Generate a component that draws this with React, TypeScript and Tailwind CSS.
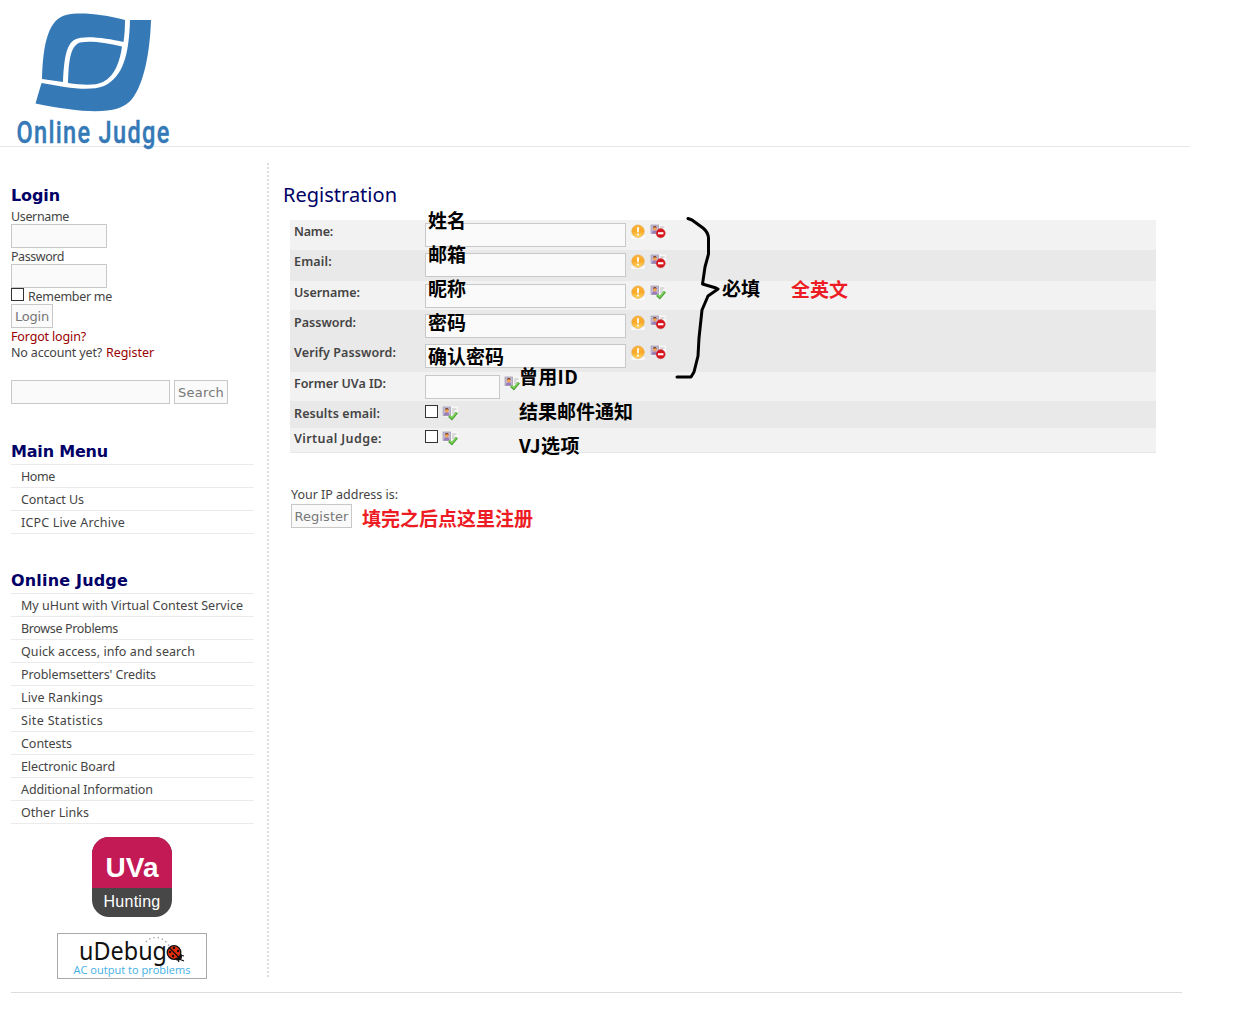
import { useLayoutEffect, useRef, useState } from "react";
import type { ReactNode } from "react";

/* Text whose tracking is spread so that the line takes a given width. */
function Fit({ w, className = "", children }: { w: number; className?: string; children: string }) {
  const ref = useRef<HTMLSpanElement>(null);
  const [gap, setGap] = useState(0);
  useLayoutEffect(() => {
    const natural = ref.current!.getBoundingClientRect().width - gap * children.length;
    setGap((w - natural) / children.length);
  }, [w, children]);
  return (
    <span ref={ref} style={{ letterSpacing: `${gap}px` }} className={`inline-block whitespace-nowrap ${className}`}>
      {children}
    </span>
  );
}

function Alert() {
  return (
    <svg width="16" height="16" viewBox="0 0 16 16" className="shrink-0">
      <defs>
        <linearGradient id="amber" x1="0" y1="0" x2="0" y2="1">
          <stop offset="0" stopColor="#fcb53a" />
          <stop offset=".5" stopColor="#faa826" />
          <stop offset="1" stopColor="#ffdc66" />
        </linearGradient>
      </defs>
      <rect x="1" y="12.500" width="14" height="3.500" rx="1.500" fill="#fff" opacity=".7" />
      <circle cx="8" cy="8.200" r="6.200" fill="url(#amber)" stroke="#e9a640" strokeWidth=".7" />
      <path d="M8 4.800v3.800" stroke="#fff" strokeWidth="1.800" strokeLinecap="round" />
      <circle cx="8" cy="11.400" r="1" fill="#fff" />
    </svg>
  );
}

function Card({ ok }: { ok?: boolean }) {
  return (
    <svg width="16" height="16" viewBox="0 0 16 16" className="shrink-0">
      <rect x="0" y="1.500" width="16" height="10" fill="#f8f8f8" />
      <rect x="1" y="2" width="7.500" height="8.400" fill="#c3b9d6" stroke="#a39daf" strokeWidth=".8" />
      <path d="M2 10.500c0-2.500 1-3.300 2.700-3.300S7.400 8 7.400 10.500z" fill="#9a7cba" />
      <circle cx="4.800" cy="5.500" r="1.900" fill="#f3a253" />
      <path d="M2.900 5c0-2.600 3.800-2.600 3.800 0-1-.8-2.500-1-3.800 0z" fill="#75452c" />
      <path d="M10 4h4.500M10 6h2.500M10 8h4.500" stroke="#b5b5b5" strokeWidth=".9" />
      {ok ? (
        <>
          <path d="M7 11l2.800 2.600 5.200-6" fill="none" stroke="#4f9f35" strokeWidth="2.600" />
          <path d="M7.400 10.600l2.400 2.200 4.800-5.400" fill="none" stroke="#82d85f" strokeWidth="1.300" />
        </>
      ) : (
        <>
          <circle cx="10.700" cy="10.200" r="4.600" fill="#d9131b" stroke="#c0565a" strokeWidth=".5" />
          <rect x="8" y="9.200" width="5.400" height="2.100" fill="#fff" />
        </>
      )}
    </svg>
  );
}

function Logo() {
  return (
    <svg width="190" height="160" viewBox="0 0 190 160" className="relative block overflow-visible">
      <g fill="#357ab7">
        <path d="M125 20C102 14 80 12 66 15C49 19 43 42 42 79L63 82C64 60 66 44 75 39.500C84 35 106 38 123.500 42C124.600 35 125 28 125 20z" />
        <path d="M122 46.500C105 42.500 90 40.500 80 42.500C70 46 68.500 62 68 83C82 85 94 86 103 82C115 76 120 61 122 46.500z" />
        <path d="M130 20H151C150 52 144 84 132 99C119 116 83 113 35.500 103.500L41.500 83C65 87 88 92 104 86C123 77 129 55 130 20z" />
        <text
          transform="translate(16.5 143) scale(.76 1)"
          fontFamily="Roboto, sans-serif"
          fontSize="31"
          fontWeight="500"
          textLength="201"
          stroke="#357ab7"
          strokeWidth=".4"
        >
          Online Judge
        </text>
      </g>
    </svg>
  );
}

const box = "h-6 border border-[#c8c8c8] bg-[#fafafa]";
const button =
  "flex h-6 items-center justify-center border border-[#c8c8c8] bg-[#fafafa] pt-0.5 font-['DejaVu_Sans',sans-serif] text-[13px] text-[#777]";

function Check() {
  return <div className="size-[13px] shrink-0 border border-[#333] bg-white" />;
}

function Heading({ w, children }: { w: number; children: string }) {
  return (
    <h3 className="h-[26px] font-['DejaVu_Sans',sans-serif] text-base leading-[28px] font-bold text-[#000066]">
      <Fit w={w}>{children}</Fit>
    </h3>
  );
}

function Line({ className = "", children }: { className?: string; children: ReactNode }) {
  return <div className={`flex h-4 gap-1 leading-[18px] ${className}`}>{children}</div>;
}

function Menu({ items }: { items: [string, number][] }) {
  return (
    <ul className="w-[243px] border-t border-[#ebebeb]">
      {items.map(([label, w]) => (
        <li key={label} className="h-[23px] border-b border-[#ebebeb] pl-[10px] leading-[23px]">
          <Fit w={w}>{label}</Fit>
        </li>
      ))}
    </ul>
  );
}

const mainMenu: [string, number][] = [["Home", 34], ["Contact Us", 63], ["ICPC Live Archive", 104]];
const judgeMenu: [string, number][] = [
  ["My uHunt with Virtual Contest Service", 222],
  ["Browse Problems", 97],
  ["Quick access, info and search", 174],
  ["Problemsetters' Credits", 135],
  ["Live Rankings", 82],
  ["Site Statistics", 82],
  ["Contests", 51],
  ["Electronic Board", 94],
  ["Additional Information", 132],
  ["Other Links", 68],
];

function Row({ label, w, tone, pad = "pt-1", children }: { label: string; w: number; tone: string; pad?: string; children: ReactNode }) {
  return (
    <div className={`flex items-start pl-1 ${tone}`}>
      <div className={`w-[131px] leading-4 font-semibold ${pad}`}>
        <Fit w={w}>{label}</Fit>
      </div>
      {children}
    </div>
  );
}

function Required({ ok, pad = "pt-[3px]" }: { ok?: boolean; pad?: string }) {
  return (
    <div className={`flex items-start ${pad}`}>
      <div className={`${box} w-[201px]`} />
      <div className="flex gap-1 pl-1">
        <Alert />
        <Card ok={ok} />
      </div>
    </div>
  );
}

function Note({ at, w, children }: { at: string; w: number; children: string }) {
  return (
    <div className={`absolute text-[19px] leading-6 font-bold font-['Noto_Sans_CJK_SC',sans-serif] ${at}`}>
      <Fit w={w}>{children}</Fit>
    </div>
  );
}

function Udebug() {
  return (
    <svg width="150" height="46" viewBox="0 0 150 46" className="block">
      <rect x=".5" y=".5" width="149" height="45" fill="#fff" stroke="#aaa" />
      <text x="22" y="26.500" fontFamily="'Noto Sans', sans-serif" fontSize="25" fill="#111" textLength="88" lengthAdjust="spacingAndGlyphs">uDebug</text>
      <path d="M89 9C94 3 106 2 112 13" fill="none" stroke="#999" strokeWidth="1.300" strokeDasharray="1.300 3" />
      <path d="M120 25l2 4M123 22l4 1M122 26l5 2" stroke="#111" strokeWidth="1.200" />
      <circle cx="121" cy="23.500" r="4" fill="#111" />
      <circle cx="117" cy="19.500" r="6.800" fill="#e62c0d" stroke="#111" strokeWidth="1.300" />
      <path d="M112 14.500l10 10" stroke="#111" strokeWidth="1.300" />
      <g fill="#111">
        <circle cx="117" cy="15" r="1.200" /><circle cx="121" cy="18" r="1.200" /><circle cx="113" cy="19" r="1.200" /><circle cx="116" cy="23" r="1.200" />
      </g>
      <text x="16.500" y="41" fontFamily="'Open Sans', sans-serif" fontSize="11" fill="#45afe5" textLength="117" lengthAdjust="spacingAndGlyphs">AC output to problems</text>
    </svg>
  );
}

export default function App() {
  return (
    <div className="relative h-[1016px] w-[1244px] overflow-hidden bg-white font-['Noto_Sans',sans-serif] text-[12.5px] leading-4 text-[#444]">
      <header className="h-[147px] w-[1190px] border-b border-[#e6e8e8]">
        <Logo />
      </header>

      <div className="mt-4 flex h-[814px]">
        <aside className="w-[269px] shrink-0 border-r-2 border-dotted border-[#ddd] pt-[19px] pl-[11px]">
          <Heading w={49}>Login</Heading>
          <Line><Fit w={58}>Username</Fit></Line>
          <div className={`${box} w-24`} />
          <Line><Fit w={53}>Password</Fit></Line>
          <div className={`${box} w-24`} />
          <Line><Check /><Fit w={84}>Remember me</Fit></Line>
          <div className={`${button} w-[42px]`}><Fit w={34}>Login</Fit></div>
          <Line className="text-[#990000]"><Fit w={75}>Forgot login?</Fit></Line>
          <Line><Fit w={91}>No account yet?</Fit><Fit w={48} className="text-[#990000]">Register</Fit></Line>
          <div className="mt-5 flex gap-1">
            <div className={`${box} w-[159px]`} />
            <div className={`${button} w-[54px]`}><Fit w={46}>Search</Fit></div>
          </div>
          <div className="mt-[34px]">
            <Heading w={97}>Main Menu</Heading>
            <Menu items={mainMenu} />
          </div>
          <div className="mt-[33px]">
            <Heading w={117}>Online Judge</Heading>
            <Menu items={judgeMenu} />
          </div>
          <div className="mt-[13px] ml-[81px] flex size-20 flex-col overflow-hidden rounded-[17px] bg-[#474747] text-center font-['Liberation_Sans',sans-serif] text-white">
            <div className="h-[51px] bg-[#c31955] pt-[11px] text-[28px] leading-10 font-bold"><Fit w={53}>UVa</Fit></div>
            <div className="text-base leading-[27px]"><Fit w={57}>Hunting</Fit></div>
          </div>
          <div className="mt-4 ml-[46px]"><Udebug /></div>
        </aside>

        <main className="pt-[19px] pl-[14px]">
          <h2 className="h-[38px] text-[20px] leading-[26px] text-[#000066]"><Fit w={114}>Registration</Fit></h2>
          <section className="ml-[7px] w-[866px] border-b border-[#e6e6e6]">
            <Row label="Name:" w={39} tone="h-[30px] bg-[#f2f2f2]"><Required /></Row>
            <Row label="Email:" w={38} tone="h-[31px] bg-[#e9e9e9]"><Required /></Row>
            <Row label="Username:" w={66} tone="h-[29px] bg-[#f2f2f2]"><Required ok /></Row>
            <Row label="Password:" w={62} tone="h-[31px] bg-[#e9e9e9]" pad="pt-[5px]"><Required pad="pt-1" /></Row>
            <Row label="Verify Password:" w={102} tone="h-[31px] bg-[#e9e9e9]"><Required /></Row>
            <Row label="Former UVa ID:" w={92} tone="h-[29px] bg-[#f2f2f2]">
              <div className="flex gap-1 pt-[3px]"><div className={`${box} w-[75px]`} /><Card ok /></div>
            </Row>
            <Row label="Results email:" w={86} tone="h-[27px] bg-[#e9e9e9]" pad="pt-[5px]">
              <div className="flex gap-1 pt-1"><Check /><Card ok /></div>
            </Row>
            <Row label="Virtual Judge:" w={88} tone="h-6 bg-[#f2f2f2]" pad="pt-[3px]">
              <div className="flex gap-1 pt-[2px]"><Check /><Card ok /></div>
            </Row>
          </section>
          <div className="mt-[34px] ml-2"><Fit w={107}>Your IP address is:</Fit></div>
          <div className={`${button} mt-px ml-2 w-[61px]`}><Fit w={54}>Register</Fit></div>
        </main>
      </div>

      <footer className="mt-[15px] ml-[11px] w-[1171px] border-t border-[#ddd]" />

      <div className="text-black">
        <Note at="left-[428px] top-[208px]" w={38}>姓名</Note>
        <Note at="left-[428px] top-[242px]" w={38}>邮箱</Note>
        <Note at="left-[428px] top-[276px]" w={38}>昵称</Note>
        <Note at="left-[428px] top-[310px]" w={38}>密码</Note>
        <Note at="left-[428px] top-[344px]" w={76}>确认密码</Note>
        <Note at="left-[519px] top-[364px]" w={59}>曾用ID</Note>
        <Note at="left-[519px] top-[399px]" w={114}>结果邮件通知</Note>
        <Note at="left-[519px] top-[433px]" w={61}>VJ选项</Note>
        <Note at="left-[722px] top-[276px]" w={38}>必填</Note>
        <Note at="left-[791px] top-[277px] text-[#ed1c24]" w={57}>全英文</Note>
        <Note at="left-[362px] top-[506px] text-[#ed1c24]" w={171}>填完之后点这里注册</Note>
        <svg width="50" height="170" viewBox="0 0 50 170" className="absolute top-[213px] left-[672px]">
          <path d="M16 5.500L20 7L31 15Q36 19 36.500 25V41L33 54L30.500 71L44 75L46 76L36 83L30 97L27 125L26 143L22 159L19 164H5" fill="none" stroke="#000" strokeWidth="3" strokeLinecap="round" strokeLinejoin="round" />
        </svg>
      </div>
    </div>
  );
}
